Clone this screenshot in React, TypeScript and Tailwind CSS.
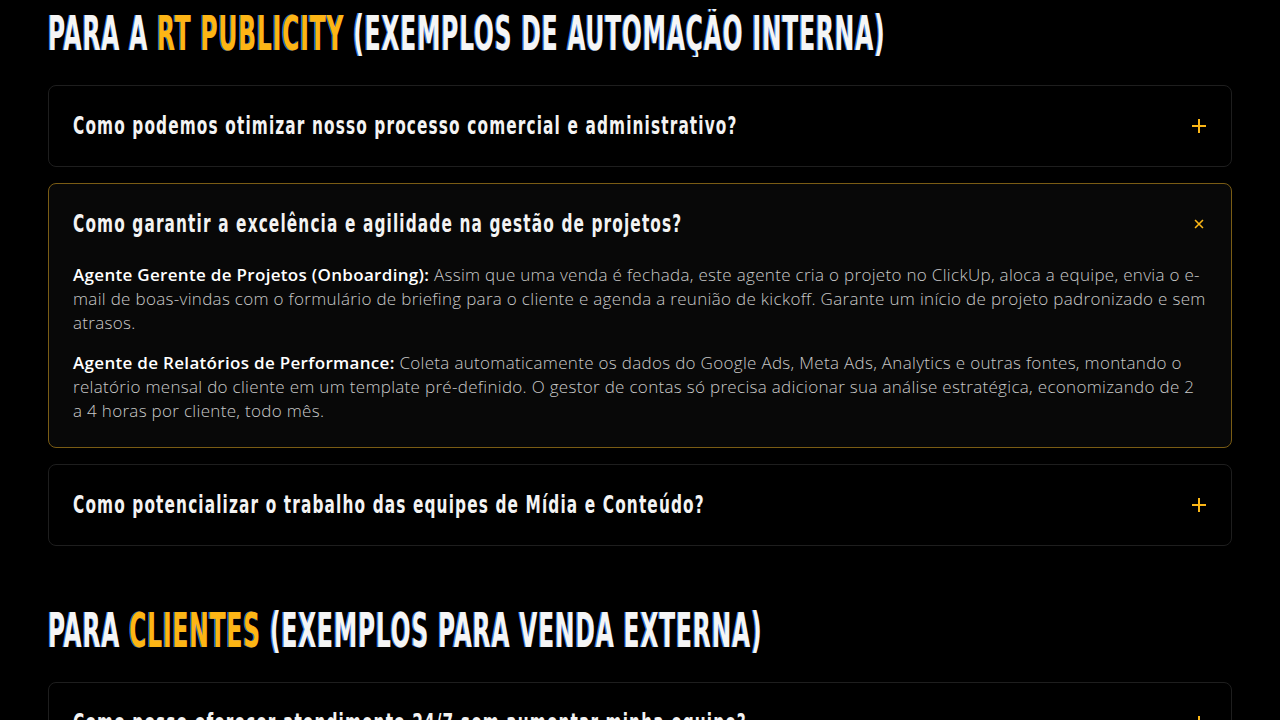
import { useState } from "react";

type Item = {
  q: string;
  a: { title: string; text: string }[];
};

const internal: Item[] = [
  {
    q: "Como podemos otimizar nosso processo comercial e administrativo?",
    a: [],
  },
  {
    q: "Como garantir a excelência e agilidade na gestão de projetos?",
    a: [
      {
        title: "Agente Gerente de Projetos (Onboarding):",
        text: "Assim que uma venda é fechada, este agente cria o projeto no ClickUp, aloca a equipe, envia o e-mail de boas-vindas com o formulário de briefing para o cliente e agenda a reunião de kickoff. Garante um início de projeto padronizado e sem atrasos.",
      },
      {
        title: "Agente de Relatórios de Performance:",
        text: "Coleta automaticamente os dados do Google Ads, Meta Ads, Analytics e outras fontes, montando o relatório mensal do cliente em um template pré-definido. O gestor de contas só precisa adicionar sua análise estratégica, economizando de 2 a 4 horas por cliente, todo mês.",
      },
    ],
  },
  {
    q: "Como potencializar o trabalho das equipes de Mídia e Conteúdo?",
    a: [],
  },
];

const external: Item[] = [
  {
    q: "Como posso oferecer atendimento 24/7 sem aumentar minha equipe?",
    a: [],
  },
];

// no Anton offline: condensed DejaVu squeezed horizontally
const headFont = "font-['DejaVu_Sans_Condensed','DejaVu_Sans',sans-serif]";

function PlusIcon({ open }: { open: boolean }) {
  return (
    <svg
      width="16"
      height="16"
      viewBox="0 0 16 16"
      className={`shrink-0 transition-transform ${open ? "rotate-45 scale-[0.8]" : ""}`}
    >
      <path d="M8 1v14M1 8h14" stroke="#fbb616" strokeWidth="2" />
    </svg>
  );
}

function Accordion({ items, defaultOpen }: { items: Item[]; defaultOpen: number | null }) {
  const [open, setOpen] = useState<number | null>(defaultOpen);

  return (
    <div className="flex flex-col gap-4">
      {items.map((item, i) => {
        const isOpen = open === i;
        return (
          <div
            key={item.q}
            className={`rounded-lg border ${
              isOpen ? "border-[#7a5c14] bg-[#080808]" : "border-[#1e1e1e] bg-black"
            }`}
          >
            <button
              className="w-full flex items-center justify-between gap-4 px-6 py-6 text-left overflow-hidden"
              onClick={() => setOpen(isOpen ? null : i)}
            >
              <span
                className={`${headFont} inline-block origin-left scale-x-[0.71] whitespace-nowrap font-bold text-[24px] leading-8 tracking-[1.6px] text-[#f3f3f3]`}
              >
                {item.q}
              </span>
              <PlusIcon open={isOpen} />
            </button>
            {isOpen && (
              <div className="px-6 pb-6 -mt-[1px] flex flex-col gap-4">
                {item.a.map((p) => (
                  <p
                    key={p.title}
                    className="font-['Open_Sans',sans-serif] font-light text-[17px] leading-6 tracking-[0.31px] text-[#c9c9c9]"
                  >
                    <strong className="font-semibold text-white">{p.title}</strong> {p.text}
                  </p>
                ))}
              </div>
            )}
          </div>
        );
      })}
    </div>
  );
}

function Heading({ pre, hl, post }: { pre: string; hl: string; post: string }) {
  return (
    <h2 className="mb-7 h-12 overflow-hidden">
      <span
        className={`${headFont} inline-block origin-left scale-x-[0.542] whitespace-nowrap font-bold uppercase text-[48px] leading-[48px] tracking-[1.5px] text-[#f5f5f5] [text-shadow:-2px_0_#3a78d8]`}
      >
        {pre} <span className="text-[#fdb515]">{hl}</span> {post}
      </span>
    </h2>
  );
}

export default function App() {
  return (
    <div className="min-h-screen bg-black px-12 pt-[9px] pb-20">
      <section>
        <Heading pre="Para a" hl="RT Publicity" post="(Exemplos de Automação Interna)" />
        <Accordion items={internal} defaultOpen={1} />
      </section>
      <section className="mt-[60px]">
        <Heading pre="Para" hl="Clientes" post="(Exemplos para Venda Externa)" />
        <Accordion items={external} defaultOpen={null} />
      </section>
    </div>
  );
}
